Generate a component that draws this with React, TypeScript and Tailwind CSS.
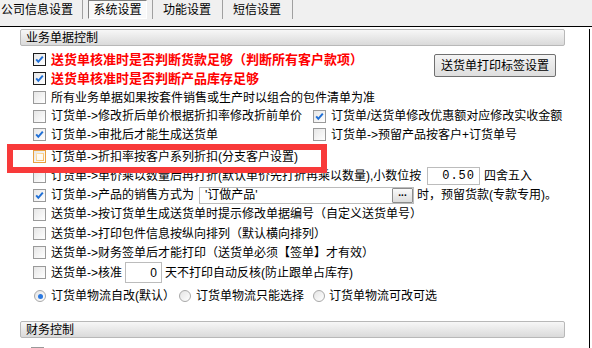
import React from "react";

const font = "font-['Liberation_Sans','Noto_Sans_CJK_SC',sans-serif]";

function Check({ checked = false, dark = false, hover = false }: { checked?: boolean; dark?: boolean; hover?: boolean }) {
  const border = hover ? "border-[#e8a040]" : dark ? "border-[#1c1c1c]" : "border-[#9a9a9a]";
  return (
    <span
      className={`relative flex h-[13px] w-[13px] shrink-0 items-center justify-center border ${border} bg-gradient-to-br from-[#e6e6e6] to-white`}
    >
      {hover && <span className="h-[8px] w-[8px] bg-gradient-to-br from-[#fde7b8] to-[#f6b650] p-px"><span className="block h-full w-full bg-white/90" /></span>}
      {checked && (
        <svg viewBox="0 0 11 11" className="h-[11px] w-[11px]">
          <path d="M2.2 5.4 L4.3 7.8 L8.8 2.6" fill="none" stroke="#1f6fd6" strokeWidth="2" />
        </svg>
      )}
    </span>
  );
}

function Radio({ on = false }: { on?: boolean }) {
  return (
    <span className="flex h-[12px] w-[12px] shrink-0 items-center justify-center rounded-full border border-[#a8a8a8] bg-gradient-to-br from-[#e4e4e4] to-white">
      {on && <span className="h-[5px] w-[5px] rounded-full bg-[#2a78e0]" />}
    </span>
  );
}

function Row({ h, children, className = "" }: { h: string; children: React.ReactNode; className?: string }) {
  return <div className={`flex items-center pl-[33px] ${h} ${className}`}>{children}</div>;
}

function Label({ children, className = "" }: { children: React.ReactNode; className?: string }) {
  return <span className={`ml-[5px] whitespace-nowrap ${className}`}>{children}</span>;
}

function GroupHeader({ title, className = "" }: { title: string; className?: string }) {
  return (
    <div
      className={`ml-[20px] flex h-[17px] w-[545px] items-center rounded-[2px] border border-[#b8b8b8] bg-gradient-to-b from-[#f7f7f7] to-[#dadada] pl-[5px] ${className}`}
    >
      {title}
    </div>
  );
}

export default function App() {
  return (
    <div className={`relative h-[348px] w-[592px] overflow-hidden bg-white text-[12px] leading-none text-black ${font}`}>
      {/* 顶部页签 */}
      <div className="flex h-[27px] items-start border-b border-black bg-[#f0f0f0]">
        <span className="flex h-[20px] w-[82px] items-center pl-[1px]">公司信息设置</span>
        <span className="h-[19px] w-px bg-[#a0a0a0]" />
        <span className="ml-[5px] flex h-[19px] w-[59px] items-center justify-center border border-t-[#808080] border-l-[#808080] border-r-white border-b-white bg-[#f9f9f9]">
          系统设置
        </span>
        <span className="ml-[5px] h-[19px] w-px bg-[#a0a0a0]" />
        <span className="ml-[10px] flex h-[20px] w-[48px] items-center">功能设置</span>
        <span className="ml-[11px] h-[19px] w-px bg-[#a0a0a0]" />
        <span className="ml-[10px] flex h-[20px] w-[48px] items-center">短信设置</span>
        <span className="ml-[11px] h-[19px] w-px bg-[#a0a0a0]" />
      </div>

      <div className="relative h-[321px] w-[590px] border-r border-black">
        <GroupHeader title="业务单据控制" className="mt-[2px]" />

        <div className="mt-[4px] flex">
          <div className="w-[434px]">
            <Row h="h-[19px]">
              <Check checked dark />
              <Label className="font-bold text-[13px] text-[#ff0000]">送货单核准时是否判断货款足够（判断所有客户款项）</Label>
            </Row>
            <Row h="h-[19px]">
              <Check checked dark />
              <Label className="font-bold text-[13px] text-[#ff0000]">送货单核准时是否判断产品库存足够</Label>
            </Row>
          </div>
          <button className="mt-[4px] h-[23px] w-[122px] rounded-[2px] border border-[#707070] bg-gradient-to-b from-[#f4f4f4] to-[#dedede] text-[12px]">
            送货单打印标签设置
          </button>
        </div>

        <Row h="h-[19px]">
          <Check />
          <Label>所有业务单据如果按套件销售或生产时以组合的包件清单为准</Label>
        </Row>
        <div className="flex h-[18px] items-center">
          <Row h="h-[18px]" className="w-[313px]">
            <Check />
            <Label>订货单-&gt;修改折后单价根据折扣率修改折前单价</Label>
          </Row>
          <Check checked />
          <Label>订货单/送货单修改优惠额对应修改实收金额</Label>
        </div>
        <div className="flex h-[19px] items-center">
          <Row h="h-[19px]" className="w-[313px]">
            <Check checked />
            <Label>订货单-&gt;审批后才能生成送货单</Label>
          </Row>
          <Check />
          <Label>订货单-&gt;预留产品按客户+订货单号</Label>
        </div>

        <Row h="h-[19px]" className="mt-[3px]">
          <Check hover />
          <Label>订货单-&gt;折扣率按客户系列折扣(分支客户设置)</Label>
        </Row>
        <Row h="h-[20px]">
          <Check />
          <Label className="w-[376px]">订货单-&gt;单价乘以数量后再打折(默认单价先打折再乘以数量),小数位按</Label>
          <span className="flex h-[18px] w-[53px] items-center justify-end border border-[#bcbcbc] pr-[4px] font-['Liberation_Mono',monospace] tracking-[1px]">
            0.50
          </span>
          <span className="ml-[4px]">四舍五入</span>
        </Row>
        <Row h="h-[18px]">
          <Check checked />
          <Label className="w-[148px]">订货单-&gt;产品的销售方式为</Label>
          <span className="flex h-[17px] w-[215px] items-center justify-between border border-[#bcbcbc] pl-[5px]">
            <span>'订做产品'</span>
            <span className="flex h-[15px] w-[21px] items-center justify-center rounded-[1px] border border-[#8c8c8c] bg-gradient-to-b from-[#fafafa] to-[#dcdcdc] pb-[4px] text-[10px] font-bold">
              ...
            </span>
          </span>
          <span className="ml-[3px]">时，预留货款(专款专用)。</span>
        </Row>
        <Row h="h-[20px]">
          <Check />
          <Label>送货单-&gt;按订货单生成送货单时提示修改单据编号（自定义送货单号）</Label>
        </Row>
        <Row h="h-[19px]">
          <Check />
          <Label>送货单-&gt;打印包件信息按纵向排列（默认横向排列）</Label>
        </Row>
        <Row h="h-[19px]">
          <Check />
          <Label>送货单-&gt;财务签单后才能打印（送货单必须【签单】才有效）</Label>
        </Row>
        <Row h="h-[21px]">
          <Check />
          <Label className="w-[74px]">送货单-&gt;核准</Label>
          <span className="flex h-[21px] w-[37px] items-center justify-end border border-[#bcbcbc] pr-[4px]">0</span>
          <span className="ml-[3px]">天不打印自动反核(防止跟单占库存)</span>
        </Row>
        <div className="mt-[2px] flex h-[22px] items-center pl-[34px]">
          <Radio on />
          <span className="ml-[5px] w-[128px]">订货单物流自改(默认）</span>
          <Radio />
          <span className="ml-[5px] w-[117px]">订货单物流只能选择</span>
          <Radio />
          <span className="ml-[4px]">订货单物流可改可选</span>
        </div>

        <GroupHeader title="财务控制" className="mt-[14px]" />
        <div className="mt-[9px] pl-[31px]">
          <Check />
        </div>

        {/* 红色标注框 */}
        <div className="pointer-events-none absolute left-[7px] top-[115px] h-[29px] w-[320px] border-[6px] border-[#f83a3a]" />
      </div>
    </div>
  );
}
